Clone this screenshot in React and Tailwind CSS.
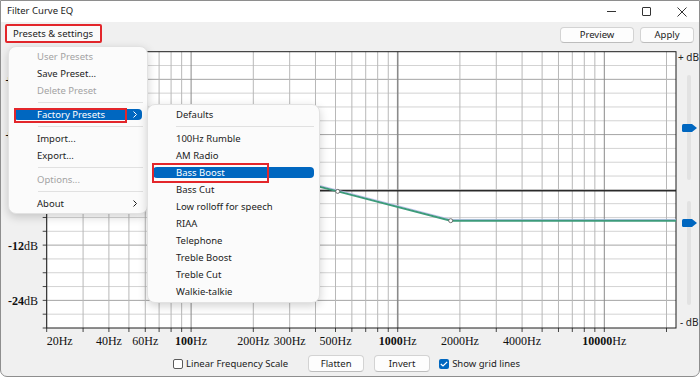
import React from 'react';
import clsx from 'clsx';

// plot geometry, in page pixels
const X0 = 46.7;
const X1 = 676;
const Y0 = 51.7;
const Y1 = 328;
const DY = (Y1 - Y0) / 20;
const fx = (f) => X0 + 206.6 * Math.log10(f / 20);

const FREQS = [];
for (const dec of [10, 100, 1000, 10000]) {
  for (let m = 1; m <= 9; m++) {
    const f = dec * m;
    if (f >= 20 && f <= 20000) FREQS.push(f);
  }
}
const MAJOR = [100, 1000, 10000];

const FREQ_LABELS = [
  { f: 20, n: '20', start: true },
  { f: 40, n: '40' },
  { f: 60, n: '60' },
  { f: 100, n: '100', bold: true },
  { f: 200, n: '200' },
  { f: 300, n: '300' },
  { f: 500, n: '500' },
  { f: 1000, n: '1000', bold: true },
  { f: 2000, n: '2000' },
  { f: 4000, n: '4000' },
  { f: 10000, n: '10000', bold: true },
];

const DB_LABELS = [
  { i: 2, t: '+24' },
  { i: 6, t: '+12' },
  { i: 10, t: '0' },
  { i: 14, t: '-12' },
  { i: 18, t: '-24' },
];

const MAIN_MENU = [
  { label: 'User Presets', disabled: true },
  { label: 'Save Preset...' },
  { label: 'Delete Preset', disabled: true },
  { sep: true },
  { label: 'Factory Presets', active: true, sub: true },
  { sep: true },
  { label: 'Import...' },
  { label: 'Export...' },
  { sep: true },
  { label: 'Options...', disabled: true },
  { sep: true },
  { label: 'About', sub: true },
];

const FACTORY_MENU = [
  { label: 'Defaults' },
  { sep: true },
  { label: '100Hz Rumble' },
  { label: 'AM Radio' },
  { label: 'Bass Boost', active: true },
  { label: 'Bass Cut' },
  { label: 'Low rolloff for speech' },
  { label: 'RIAA' },
  { label: 'Telephone' },
  { label: 'Treble Boost' },
  { label: 'Treble Cut' },
  { label: 'Walkie-talkie' },
];

const CURVE = [
  [X0, 117],
  [337.7, 191.4],
  [450.7, 220.7],
  [X1, 220.7],
];

const Chevron = () => (
  <svg width="4" height="7" viewBox="0 0 4 7" className="shrink-0">
    <polyline points="0.5,0.5 3.5,3.5 0.5,6.5" fill="none" stroke="currentColor" strokeWidth="1" />
  </svg>
);

const MenuItem = ({ item, sepClass }) => {
  if (item.sep) {
    return (
      <div className={clsx('h-[7px] flex items-center', sepClass)}>
        <div className="h-px w-full bg-[#e1e1e1]" />
      </div>
    );
  }
  return (
    <div
      className={clsx(
        'my-[3px] mx-[5px] h-[11px] flex items-center rounded-[4px] pl-[23px] pr-[5px] text-[9.5px] leading-none whitespace-nowrap',
        item.active ? 'bg-[#0067c0] text-white' : item.disabled ? 'text-[#a3a3a3]' : 'text-[#1b1b1b]'
      )}
    >
      <span className="flex-1">{item.label}</span>
      {item.sub && <Chevron />}
    </div>
  );
};

const Chart = () => {
  const rows = Array.from({ length: 21 }, (_, i) => Y0 + i * DY);
  const pts = CURVE.map((p) => p.join(',')).join(' ');
  const guide = CURVE.map(([x, y]) => `${x},${y - 1.3}`).join(' ');
  return (
    <svg width="676" height="305" viewBox="1 46 676 305" className="block shrink-0">
      <rect x={X0} y={Y0} width={X1 - X0} height={Y1 - Y0} fill="#ffffff" />
      {rows.slice(1, 20).map((y, i) => {
        const idx = i + 1;
        const major = idx % 4 === 2;
        return (
          <line key={idx} x1={X0} x2={X1} y1={y} y2={y} stroke={major ? '#a4a4a4' : '#d3d3d3'} strokeWidth="1" />
        );
      })}
      {FREQS.map((f) => (
        <line
          key={f}
          x1={fx(f)}
          x2={fx(f)}
          y1={Y0}
          y2={Y1}
          stroke={MAJOR.includes(f) ? '#8a8a8a' : '#b8b8b8'}
          strokeWidth={f === 1000 ? 1.6 : 1}
        />
      ))}
      {/* 0 dB line */}
      <line x1={X0} x2={X1} y1={Y0 + 10 * DY + 1} y2={Y0 + 10 * DY + 1} stroke="#2a2a2a" strokeWidth="1.5" />
      {/* ticks */}
      {rows.map((y, i) => (
        <line key={i} x1={X0 - 4} x2={X0} y1={y} y2={y} stroke="#444" strokeWidth="1" />
      ))}
      {FREQS.map((f) => (
        <line key={f} x1={fx(f)} x2={fx(f)} y1={Y1} y2={Y1 + 4} stroke="#444" strokeWidth="1" />
      ))}
      <rect x={X0} y={Y0} width={X1 - X0} height={Y1 - Y0} fill="none" stroke="#1c1c1c" strokeWidth="1" />
      {/* curve */}
      <polyline points={guide} fill="none" stroke="#b9b9ec" strokeWidth="0.9" />
      <polyline points={pts} fill="none" stroke="#3d9b7b" strokeWidth="2" />
      <circle cx={337.7} cy={191.4} r="2" fill="#fff" stroke="#555" strokeWidth="0.8" />
      <circle cx={450.7} cy={220.7} r="2" fill="#fff" stroke="#555" strokeWidth="0.8" />
      {/* labels */}
      <g fontFamily="'Liberation Serif', serif" fontSize="12" fill="#111">
        {FREQ_LABELS.map((l) => (
          <text key={l.f} x={l.start ? X0 : fx(l.f)} y={345} textAnchor={l.start ? 'start' : 'middle'}>
            <tspan fontWeight={l.bold ? 'bold' : 'normal'}>{l.n}</tspan>Hz
          </text>
        ))}
        {DB_LABELS.map((l) => (
          <text key={l.i} x={38} y={Y0 + l.i * DY + 4.5} textAnchor="end">
            <tspan fontWeight="bold">{l.t}</tspan>dB
          </text>
        ))}
      </g>
    </svg>
  );
};

const Thumb = ({ top }) => (
  <svg width="15" height="8" viewBox="0 0 15 8" className={clsx('absolute left-[-5px]', top)}>
    <path d="M1.5 0 H10 L15 4 L10 8 H1.5 Q0 8 0 6.5 V1.5 Q0 0 1.5 0 Z" fill="#0067c0" />
  </svg>
);

const Button = ({ children, className }) => (
  <div
    className={clsx(
      'flex items-center justify-center bg-[#fdfdfd] border border-[#d3d3d3] border-b-[#bdbdbd] rounded-[4px] text-[9.5px] text-[#1b1b1b] leading-none',
      className
    )}
  >
    {children}
  </div>
);

export default function App() {
  return (
    <div className="relative w-[700px] h-[377px] overflow-hidden border border-[#8e8e8e] rounded-b-[7px] bg-[#f0f0f0] font-['Noto_Sans','Liberation_Sans',sans-serif] text-[#1b1b1b]">
      {/* title bar */}
      <div className="flex h-[21px] bg-white items-center">
        <div className="flex-1 pl-[6px] pb-[2px] text-[9.5px] leading-none">Filter Curve EQ</div>
        <div className="flex h-full">
          <div className="w-[35px] flex items-center justify-center">
            <div className="w-[9px] h-px bg-[#333]" />
          </div>
          <div className="w-[35px] flex items-center justify-center">
            <div className="w-[9px] h-[9px] border border-[#333] rounded-[1px]" />
          </div>
          <div className="w-[35px] flex items-center justify-center">
            <svg width="10" height="10" viewBox="0 0 10 10">
              <path d="M0.5 0.5 L9.5 9.5 M9.5 0.5 L0.5 9.5" stroke="#333" strokeWidth="1" />
            </svg>
          </div>
        </div>
      </div>

      {/* toolbar */}
      <div className="flex h-[24px] items-start pr-[5px]">
        <div className="ml-[4px] mt-[2px] w-[97px] h-[19px] flex items-center pl-[6px] border-2 border-[#e3262b] rounded-[2px] bg-[#fafafa] text-[9.5px] leading-none">
          Presets &amp; settings
        </div>
        <div className="flex-1" />
        <Button className="mt-[5px] w-[74px] h-[16px]">Preview</Button>
        <Button className="mt-[5px] ml-[6px] w-[54px] h-[16px]">Apply</Button>
      </div>

      {/* graph */}
      <div className="flex h-[305px]">
        <Chart />
        <div className="w-[22px] flex flex-col text-[10px] leading-none text-[#222]">
          <div className="mt-[6px] ml-[1px] h-[11px]">+ dB</div>
          <div className="relative mt-[12px] ml-[10px] w-[4px] h-[105px] rounded-full bg-[#e2e2e2]">
            <Thumb top="top-[49px]" />
          </div>
          <div className="relative mt-[21px] ml-[10px] w-[4px] h-[104px] rounded-full bg-[#e2e2e2]">
            <Thumb top="top-[18px]" />
          </div>
          <div className="mt-[12px] ml-[3px] h-[11px]">- dB</div>
        </div>
      </div>

      {/* bottom controls */}
      <div className="flex h-[25px] items-center pl-[172px] text-[9.5px] leading-none">
        <div className="w-[10px] h-[10px] border border-[#5a5a5a] rounded-[2px] bg-white" />
        <span className="ml-[3px]">Linear Frequency Scale</span>
        <Button className="ml-[20px] w-[56px] h-[17px]">Flatten</Button>
        <Button className="ml-[10px] w-[56px] h-[17px]">Invert</Button>
        <div className="ml-[9px] w-[10px] h-[10px] rounded-[2px] bg-[#0067c0] flex items-center justify-center">
          <svg width="8" height="6" viewBox="0 0 8 6">
            <polyline points="0.8,3 3,5 7.2,0.8" fill="none" stroke="#fff" strokeWidth="1.2" />
          </svg>
        </div>
        <span className="ml-[3px]">Show grid lines</span>
      </div>

      {/* presets menu */}
      <div className="absolute left-[7px] top-[45px] w-[140px] flex flex-col pt-[1px] pb-[1px] bg-[#fbfbfb] border border-[#e2e2e2] rounded-[8px] shadow-[0_3px_10px_rgba(0,0,0,0.18)]">
        {MAIN_MENU.map((item, i) => (
          <MenuItem key={i} item={item} sepClass="ml-[29px] mr-[4px]" />
        ))}
      </div>

      {/* factory presets submenu */}
      <div className="absolute left-[146px] top-[103px] w-[173px] flex flex-col pt-[1px] pb-[2px] bg-[#fbfbfb] border border-[#e2e2e2] rounded-[8px] shadow-[0_3px_10px_rgba(0,0,0,0.18)]">
        {FACTORY_MENU.map((item, i) => (
          <MenuItem key={i} item={item} sepClass="ml-[28px] mr-[5px]" />
        ))}
      </div>

      {/* annotation boxes */}
      <div className="absolute left-[13px] top-[107px] w-[113px] h-[15px] border-2 border-[#e3262b]" />
      <div className="absolute left-[151px] top-[162px] w-[117px] h-[20px] border-2 border-[#e3262b]" />
    </div>
  );
}
